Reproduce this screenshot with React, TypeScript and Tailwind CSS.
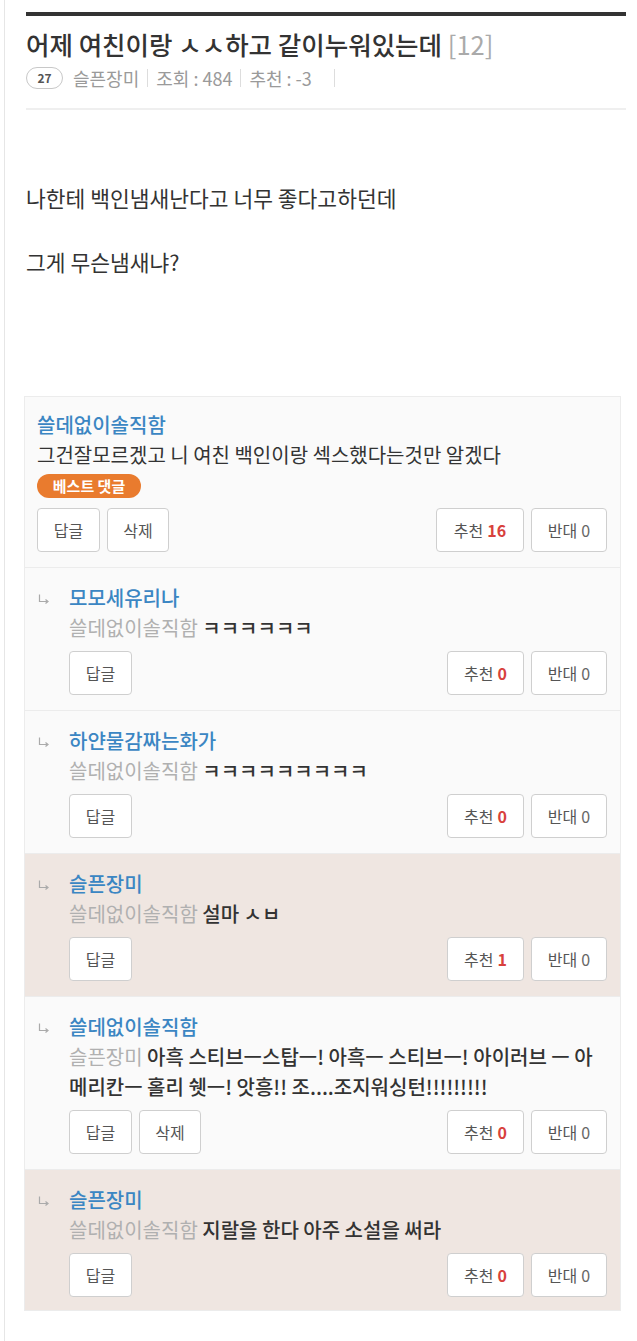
import React from "react";

type Reply = {
  name: string;
  to: string;
  text: React.ReactNode;
  likes: number;
  canDelete?: boolean;
  mine?: boolean;
};

const replies: Reply[] = [
  { name: "모모세유리나", to: "쓸데없이솔직함", text: "ㅋㅋㅋㅋㅋㅋ", likes: 0 },
  { name: "하얀물감짜는화가", to: "쓸데없이솔직함", text: "ㅋㅋㅋㅋㅋㅋㅋㅋㅋ", likes: 0 },
  { name: "슬픈장미", to: "쓸데없이솔직함", text: "설마 ㅅㅂ", likes: 1, mine: true },
  {
    name: "쓸데없이솔직함",
    to: "슬픈장미",
    text: (
      <>
        아흑 스티브ㅡ스탑ㅡ! 아흑ㅡ 스티브ㅡ! 아이러브 ㅡ 아
        <br />
        메리칸ㅡ 홀리 쉣ㅡ! 앗흥!! 조....조지워싱턴!!!!!!!!!
      </>
    ),
    likes: 0,
    canDelete: true,
  },
  { name: "슬픈장미", to: "쓸데없이솔직함", text: "지랄을 한다 아주 소설을 써라", likes: 0, mine: true },
];

function Btn({ w, children }: { w: string; children: React.ReactNode }) {
  return (
    <button
      className={`${w} h-[44px] rounded-[4px] border border-[#cfcfcf] bg-white text-[16px] text-[#555] flex items-center justify-center gap-[4px]`}
    >
      {children}
    </button>
  );
}

function Buttons({ likes, canDelete, wide }: { likes: number; canDelete?: boolean; wide?: boolean }) {
  return (
    <div className="flex justify-between">
      <div className="flex gap-[7px]">
        <Btn w="w-[63px]">답글</Btn>
        {canDelete && <Btn w="w-[62px]">삭제</Btn>}
      </div>
      <div className="flex gap-[7px]">
        <Btn w={wide ? "w-[88px]" : "w-[77px]"}>
          추천 <span className="font-bold text-[#d8413c]">{likes}</span>
        </Btn>
        <Btn w="w-[76px]">
          반대 <span className="text-[#666]">0</span>
        </Btn>
      </div>
    </div>
  );
}

function Arrow() {
  return (
    <svg width="12" height="11" viewBox="0 0 12 11" className="mt-[11px]">
      <path d="M1.5 0.5 V7.5 H9" fill="none" stroke="#aaa" strokeWidth="1.2" />
      <path d="M7.5 5.5 L10 7.5 L7.5 9.5" fill="none" stroke="#aaa" strokeWidth="1.2" />
    </svg>
  );
}

export default function App() {
  return (
    <div className="w-[637px] min-h-[1341px] bg-white font-['Noto_Sans_CJK_KR','Noto_Sans',sans-serif]">
      <div className="ml-[4px] min-h-[1341px] border-l border-[#e6e6e6] pl-[21px] pr-[11px] pt-[12px]">
        <div className="h-[4px] bg-[#333]" />
        <h1 className="mt-[12px] text-[25.5px] leading-[32px] font-medium text-[#333] whitespace-nowrap">
          어제 여친이랑 ㅅㅅ하고 같이누워있는데 <span className="font-normal text-[#aaa]">[12]</span>
        </h1>
        <div className="mt-[6px] flex h-[24px] items-center text-[18px] text-[#9a9a9a]">
          <span className="flex h-[22px] w-[37px] items-center justify-center rounded-full border border-[#c8c8c8] text-[12px] font-bold text-[#555]">
            27
          </span>
          <span className="ml-[10px]">슬픈장미</span>
          <span className="mx-[8px] h-[18px] w-px bg-[#ddd]" />
          <span>조회 : 484</span>
          <span className="mx-[8px] h-[18px] w-px bg-[#ddd]" />
          <span>추천 : -3</span>
          <span className="ml-[22px] h-[18px] w-px bg-[#ddd]" />
        </div>
        <div className="mt-[18px] h-[2px] bg-[#efefef]" />

        <p className="mt-[73px] text-[21.5px] leading-[30px] text-[#333]">나한테 백인냄새난다고 너무 좋다고하던데</p>
        <p className="mt-[34px] text-[21.5px] leading-[30px] text-[#333]">그게 무슨냄새냐?</p>

        <div className="mt-[119px] -ml-[2px] mr-[5px] border border-[#ececec] bg-[#fafafa]">
          <div className="border-b border-[#ececec] pt-[13px] pb-[15px] pl-[12px] pr-[13px]">
            <div className="text-[20px] leading-[30px] font-medium text-[#3b86c3]">쓸데없이솔직함</div>
            <div className="text-[20px] leading-[30px] text-[#333] whitespace-nowrap">
              그건잘모르겠고 니 여친 백인이랑 섹스했다는것만 알겠다
            </div>
            <div className="mt-[4px] flex">
              <span className="flex h-[24px] w-[104px] items-center justify-center rounded-full bg-[#e97b2e] text-[15px] font-bold text-white">
                베스트 댓글
              </span>
            </div>
            <div className="mt-[10px]">
              <Buttons likes={16} canDelete wide />
            </div>
          </div>
          {replies.map((r, i) => {
            const last = i === replies.length - 1;
            return (
              <div
                key={i}
                className={`flex pt-[15px] pl-[13px] pr-[13px] ${
                  last ? "pb-[13px]" : "pb-[15px] border-b border-[#ececec]"
                } ${r.mine ? "bg-[#efe6e1]" : ""}`}
              >
                <div className="w-[31px] shrink-0">
                  <Arrow />
                </div>
                <div className="flex-1">
                  <div className="text-[20px] leading-[30px] font-medium text-[#3b86c3]">{r.name}</div>
                  <div className="text-[20px] leading-[30px] text-[#333] font-medium whitespace-nowrap">
                    <span className="font-normal text-[#b0b0b0]">{r.to}</span> {r.text}
                  </div>
                  <div className="mt-[8px]">
                    <Buttons likes={r.likes} canDelete={r.canDelete} />
                  </div>
                </div>
              </div>
            );
          })}
        </div>
      </div>
    </div>
  );
}
